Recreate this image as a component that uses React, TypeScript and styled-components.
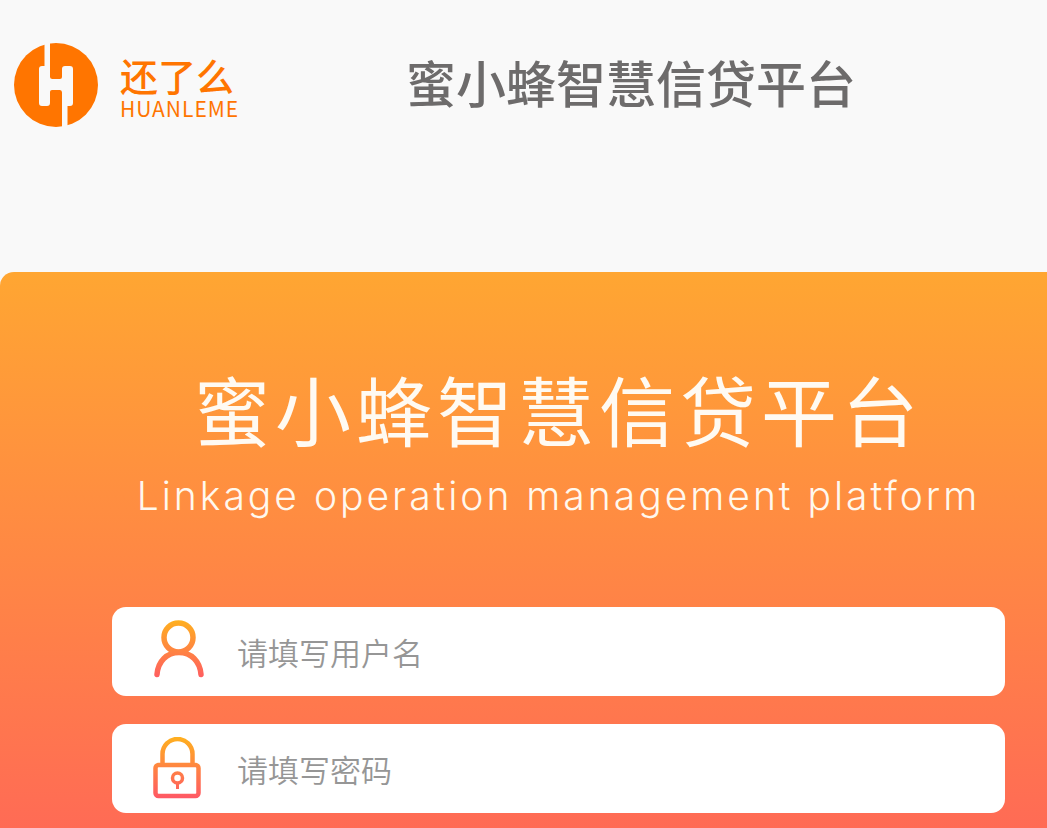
import React, { useId } from "react";
import styled, { createGlobalStyle } from "styled-components";

const GlobalStyle = createGlobalStyle`
  * { box-sizing: border-box; }
  body {
    margin: 0;
    background: #f9f9f9;
    font-family: "Noto Sans CJK SC", "Noto Sans", sans-serif;
  }
`;

const Page = styled.div`
  display: flex;
  flex-direction: column;
  min-height: 100vh;
`;

const Header = styled.header`
  display: grid;
  grid-template-columns: 392px 1fr;
  align-items: center;
  padding: 42px 14px 144px;
`;

const Brand = styled.a`
  display: flex;
  align-items: center;
  gap: 22px;
  color: #ff7500;
  text-decoration: none;
`;

const BrandText = styled.span`
  display: flex;
  flex-direction: column;
  padding-top: 4px;
`;

const BrandName = styled.span`
  font-size: 38px;
  font-weight: 500;
  line-height: 42px;
`;

const BrandLatin = styled.span`
  font-size: 21px;
  letter-spacing: 1px;
  line-height: 24px;
`;

const PageTitle = styled.h1`
  margin: 0;
  padding-bottom: 8px;
  color: #6d6b6b;
  font-size: 50px;
  font-weight: 500;
  line-height: 60px;
  white-space: nowrap;
`;

const Panel = styled.main`
  flex: 1;
  padding: 88px 42px 15px 112px;
  border-radius: 14px 0 0 0;
  background: linear-gradient(180deg, #ffa632 0%, #ff6b55 100%);
`;

const PanelTitle = styled.h2`
  margin: 0;
  color: #fffaf2;
  font-size: 76px;
  font-weight: 400;
  letter-spacing: 5px;
  line-height: 96px;
  text-align: center;
  white-space: nowrap;
`;

const Subtitle = styled.p`
  margin: 14px 0 85px;
  color: #fff8ee;
  font-family: Inter, sans-serif;
  font-size: 39px;
  font-weight: 300;
  letter-spacing: 3px;
  line-height: 52px;
  text-align: center;
  white-space: nowrap;
`;

const Form = styled.form`
  display: grid;
  gap: 28px;
`;

const Field = styled.label`
  display: flex;
  align-items: center;
  gap: 29px;
  height: 89px;
  padding: 0 36px;
  border-radius: 14px;
  background: #fff;

  svg {
    flex: none;
  }
`;

const Input = styled.input`
  flex: 1;
  min-width: 0;
  padding: 0;
  border: 0;
  outline: 0;
  background: transparent;
  color: #444;
  font-family: "Noto Sans CJK SC", sans-serif;
  font-size: 31px;
  font-weight: 350;
  line-height: 44px;

  &::placeholder {
    color: #969696;
    opacity: 1;
  }
`;

function Logo() {
  return (
    <svg width="84" height="86" viewBox="0 0 84 86" aria-hidden="true">
      <circle cx="42" cy="43" r="42" fill="#ff7500" />
      <path
        d="M30.500 0H36V34.500Q36 37 38.500 37H46Q48 37 48 35V27Q48 24 51 24H56Q59 24 59 27V61Q59 64 56 64H53.500V86H48V50.500Q48 48 46 48H38Q36 48 36 50V61Q36 64 33 64H28Q25 64 25 61V27Q25 24 28 24H30.500Z"
        fill="#f9f9f9"
      />
    </svg>
  );
}

function IconGradient({ id }: { id: string }) {
  return (
    <linearGradient id={id} x1="0" y1="0" x2="0" y2="64" gradientUnits="userSpaceOnUse">
      <stop offset="0" stopColor="#ffb01f" />
      <stop offset="1" stopColor="#ff5468" />
    </linearGradient>
  );
}

function UserIcon() {
  const id = useId();
  return (
    <svg width="60" height="64" viewBox="0 0 60 64" fill="none" aria-hidden="true">
      <defs>
        <IconGradient id={id} />
      </defs>
      <g stroke={`url(#${id})`} strokeWidth="5.500" strokeLinecap="round">
        <circle cx="30.500" cy="17.500" r="14.500" />
        <path d="M9 54.500C10 41 19 32.500 31 32.500S52 41 53 54.500" />
      </g>
    </svg>
  );
}

function LockIcon() {
  const id = useId();
  return (
    <svg width="60" height="64" viewBox="0 0 60 64" fill="none" aria-hidden="true">
      <defs>
        <IconGradient id={id} />
      </defs>
      <g stroke={`url(#${id})`} strokeWidth="4.500">
        <path d="M14.500 28V17A15 15 0 0 1 44.500 17V28" />
        <rect x="7.500" y="28" width="43" height="31" rx="3" />
        <circle cx="29.500" cy="41" r="5" strokeWidth="3.500" />
        <path d="M29.500 46V52" strokeWidth="3" />
      </g>
    </svg>
  );
}

export default function App() {
  return (
    <>
      <GlobalStyle />
      <Page>
        <Header>
          <Brand href="#">
            <Logo />
            <BrandText>
              <BrandName>还了么</BrandName>
              <BrandLatin>HUANLEME</BrandLatin>
            </BrandText>
          </Brand>
          <PageTitle>蜜小蜂智慧信贷平台</PageTitle>
        </Header>
        <Panel>
          <PanelTitle>蜜小蜂智慧信贷平台</PanelTitle>
          <Subtitle>Linkage operation management platform</Subtitle>
          <Form>
            <Field>
              <UserIcon />
              <Input type="text" name="username" placeholder="请填写用户名" aria-label="用户名" />
            </Field>
            <Field>
              <LockIcon />
              <Input type="password" name="password" placeholder="请填写密码" aria-label="密码" />
            </Field>
          </Form>
        </Panel>
      </Page>
    </>
  );
}
